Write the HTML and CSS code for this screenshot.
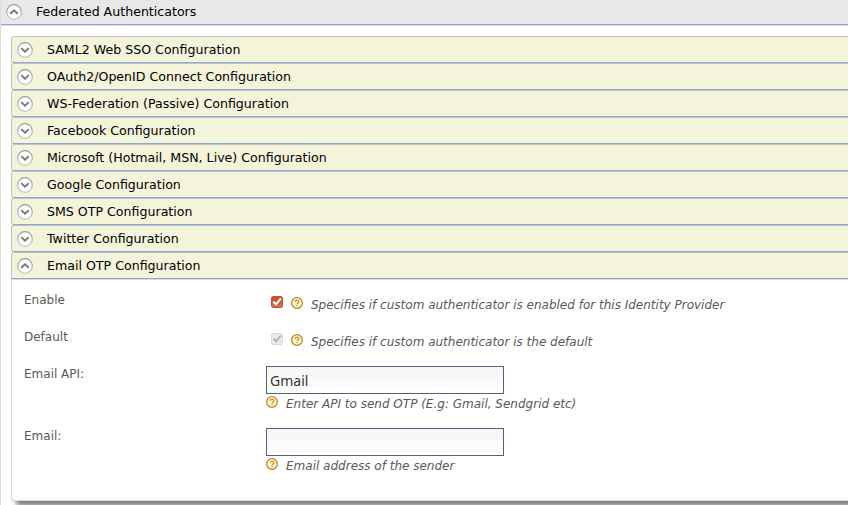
FILE: index.html
```html
<!DOCTYPE html>
<html lang="en">
<head>
<meta charset="utf-8">
<title>Federated Authenticators</title>
<link rel="stylesheet" href="styles.css">
</head>
<body>
<svg class="defs" width="0" height="0">
  <defs>
    <linearGradient id="ring" x2="0" y2="1"><stop stop-color="#999"/><stop offset="1" stop-color="#c4c4c4"/></linearGradient>
    <linearGradient id="orange" x2="0" y2="1"><stop stop-color="#c44d28"/><stop offset="1" stop-color="#df7049"/></linearGradient>
  </defs>
  <symbol id="down" viewBox="0 0 16 16"><circle cx="8" cy="8" r="7.3" fill="#fff" stroke="url(#ring)" stroke-width="1.2"/><path d="M4.2 6.1 8 9.7l3.8-3.6" fill="none" stroke="#777" stroke-width="1.9"/></symbol>
  <symbol id="up" viewBox="0 0 16 16"><circle cx="8" cy="8" r="7.3" fill="#fff" stroke="url(#ring)" stroke-width="1.2"/><path d="M4.2 9.8 8 6.2l3.8 3.6" fill="none" stroke="#777" stroke-width="1.9"/></symbol>
  <symbol id="help" viewBox="0 0 12 12"><circle cx="6" cy="6" r="5.3" fill="#fffbe0" stroke="#b58a1c" stroke-width="1.3"/><path d="M4.1 4.9C4.1 2.6 7.9 2.6 7.9 4.7 7.9 5.9 6.1 5.9 6.1 7.3" fill="none" stroke="#e18a1d" stroke-width="1.3"/><path d="M5.4 8h1.4v1.3H5.4z" fill="#e18a1d"/></symbol>
  <symbol id="checked" viewBox="0 0 12 12"><rect x=".5" y=".5" width="11" height="11" rx="1.8" fill="url(#orange)" stroke="#b9512d"/><path d="M2.4 5.7 4.9 8.3 9.9 2.5" fill="none" stroke="#fff" stroke-width="2"/></symbol>
  <symbol id="locked" viewBox="0 0 12 12"><rect x=".5" y=".5" width="11" height="11" rx="1.8" fill="#eaeaea" stroke="#d6d6d6"/><path d="M2.4 5.7 4.9 8.3 9.9 2.5" fill="none" stroke="#b0b0b0" stroke-width="1.9"/></symbol>
</svg>
<main class="section">
  <h2 class="section-head"><svg class="chevron"><use href="#up"/></svg>Federated Authenticators</h2>
  <div class="section-body">
    <h3 class="row"><svg class="chevron"><use href="#down"/></svg>SAML2 Web SSO Configuration</h3>
    <h3 class="row"><svg class="chevron"><use href="#down"/></svg>OAuth2/OpenID Connect Configuration</h3>
    <h3 class="row"><svg class="chevron"><use href="#down"/></svg>WS-Federation (Passive) Configuration</h3>
    <h3 class="row"><svg class="chevron"><use href="#down"/></svg>Facebook Configuration</h3>
    <h3 class="row"><svg class="chevron"><use href="#down"/></svg>Microsoft (Hotmail, MSN, Live) Configuration</h3>
    <h3 class="row"><svg class="chevron"><use href="#down"/></svg>Google Configuration</h3>
    <h3 class="row"><svg class="chevron"><use href="#down"/></svg>SMS OTP Configuration</h3>
    <h3 class="row"><svg class="chevron"><use href="#down"/></svg>Twitter Configuration</h3>
    <h3 class="row row-open"><svg class="chevron"><use href="#up"/></svg>Email OTP Configuration</h3>
    <div class="panel">
      <div class="field">
        <span class="label">Enable</span>
        <div class="check-line"><svg class="check"><use href="#checked"/></svg><svg class="help"><use href="#help"/></svg><em>Specifies if custom authenticator is enabled for this Identity Provider</em></div>
      </div>
      <div class="field">
        <span class="label">Default</span>
        <div class="check-line"><svg class="check"><use href="#locked"/></svg><svg class="help"><use href="#help"/></svg><em>Specifies if custom authenticator is the default</em></div>
      </div>
      <div class="field field-text">
        <label class="label" for="api">Email API:</label>
        <div><input id="api" type="text" value="Gmail"><div class="hint"><svg class="help"><use href="#help"/></svg><em>Enter API to send OTP (E.g: Gmail, Sendgrid etc)</em></div></div>
      </div>
      <div class="field field-text">
        <label class="label" for="email">Email:</label>
        <div><input id="email" type="text"><div class="hint"><svg class="help"><use href="#help"/></svg><em>Email address of the sender</em></div></div>
      </div>
    </div>
  </div>
</main>
</body>
</html>
```

FILE: styles.css
```css
* { box-sizing: border-box; }
body {
  margin: 0;
  height: 505px;
  overflow: hidden;
  background: #fff;
  color: #595959;
  font: 12px/16px "DejaVu Sans", Verdana, sans-serif;
}
svg { display: block; flex: none; }
.defs { position: absolute; }
.section { height: 505px; border-left: 1px solid #dedede; }
.section-head, .row {
  display: flex;
  align-items: center;
  margin: 0;
  font-size: 12.6px;
  font-weight: normal;
  color: #000;
}
.section-head {
  height: 26px;
  padding: 0 0 1px 5px;
  gap: 14px;
  background: #e8e8e8;
  border-bottom: 1px solid #d8dce4;
  box-shadow: inset 0 -1px #8fa6d0;
}
.section-body { padding: 10px 0 0 10px; }
.row {
  height: 27px;
  padding-left: 5px;
  gap: 14px;
  background: #f4f4da;
  border: 1px solid #bfc3c6;
  border-right: 0;
  border-bottom-color: #8fa6d0;
  border-radius: 3px 0 0 3px;
}
.row-open { border-radius: 3px 0 0 0; }
.chevron { width: 16px; height: 16px; }
.panel {
  height: 222px;
  padding: 12px 0 0 12px;
  border: 1px solid #dadada;
  border-right: 0;
  border-radius: 0 0 0 3px;
  box-shadow: 5px 5px 5px #808080;
  background: #fff;
}
.field { display: grid; grid-template-columns: 242px 1fr; height: 37px; }
.field-text { height: 62px; }
.check-line { display: flex; padding: 4px 0 0 5px; }
.check-line .check { margin-right: 8px; }
.check-line .help { margin: 1px 8px 0 0; }
.check-line em { padding-top: 1px; }
.check, .help { width: 12px; height: 12px; }
input {
  display: block;
  width: 238px;
  height: 28px;
  padding: 1px 3px;
  border: 1px solid #4d6180;
  background: linear-gradient(#f5f5f5, #fff);
  color: #333;
  font: 14px "Noto Sans", sans-serif;
}
.hint { display: flex; padding-top: 2px; gap: 8px; }
```
